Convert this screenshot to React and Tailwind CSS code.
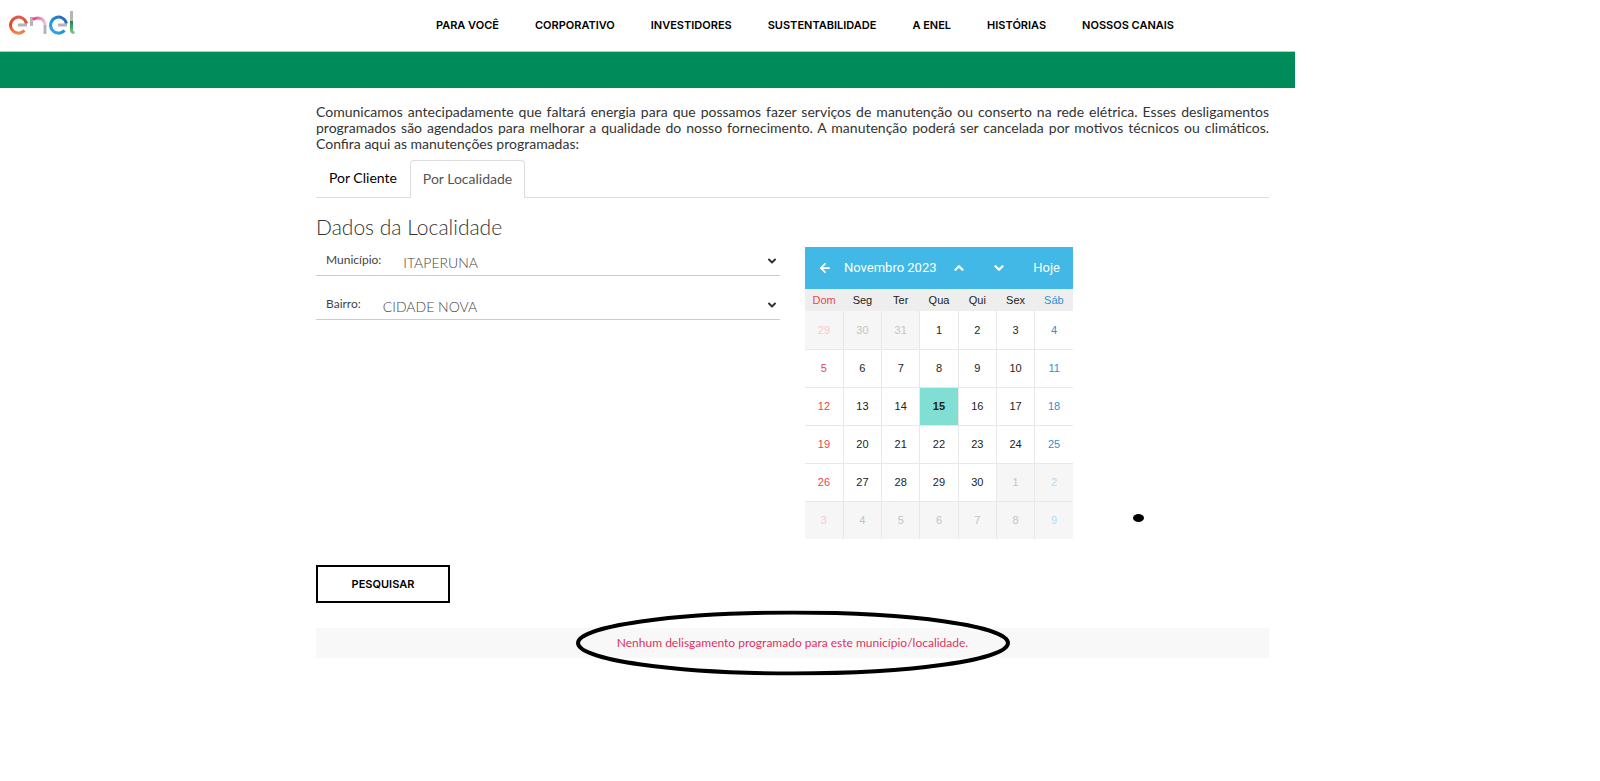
import React, { useState } from "react";
import { ArrowLeft, ChevronDown, ChevronUp } from "lucide-react";

const menu = [
  "PARA VOCÊ",
  "CORPORATIVO",
  "INVESTIDORES",
  "SUSTENTABILIDADE",
  "A ENEL",
  "HISTÓRIAS",
  "NOSSOS CANAIS",
];

const diasSemana = ["Dom", "Seg", "Ter", "Qua", "Qui", "Sex", "Sáb"];

const semanas = [
  [29, 30, 31, 1, 2, 3, 4],
  [5, 6, 7, 8, 9, 10, 11],
  [12, 13, 14, 15, 16, 17, 18],
  [19, 20, 21, 22, 23, 24, 25],
  [26, 27, 28, 29, 30, 1, 2],
  [3, 4, 5, 6, 7, 8, 9],
];

const foraDoMes = (semana, dia) => (semana === 0 && dia > 20) || (semana > 3 && dia < 20);

const corDoDia = (coluna, fora) => {
  if (coluna === 0) return fora ? "text-[#f8c9c9]" : "text-[#e8474c]";
  if (coluna === 6) return fora ? "text-[#b5dcf5]" : "text-[#2f8fd8]";
  return fora ? "text-[#c4c4c4]" : "text-[#222222]";
};

const Logo = () => (
  <svg width="68" height="26" viewBox="0 0 68 26" fill="none" role="img" aria-label="enel">
    <defs>
      <linearGradient id="laranja" x1="0" y1="0" x2="0" y2="1">
        <stop offset="0" stopColor="#e2574c" />
        <stop offset="0.5" stopColor="#e0452f" />
        <stop offset="1" stopColor="#f0874c" />
      </linearGradient>
      <linearGradient id="rosa" x1="0" y1="0" x2="1" y2="0">
        <stop offset="0" stopColor="#e0338c" />
        <stop offset="1" stopColor="#ecc3d9" />
      </linearGradient>
      <linearGradient id="azul" x1="0" y1="1" x2="1" y2="0">
        <stop offset="0" stopColor="#35b0e6" />
        <stop offset="0.5" stopColor="#1f8fd2" />
        <stop offset="1" stopColor="#2b62ae" />
      </linearGradient>
      <linearGradient id="verde" x1="0" y1="0" x2="0" y2="1">
        <stop offset="0" stopColor="#15884a" />
        <stop offset="1" stopColor="#7fcb86" />
      </linearGradient>
    </defs>
    <path d="M9 15H18" stroke="#b9b4b0" strokeWidth="3" />
    <path d="M17.4 13.5A8 8 0 1 0 15.5 20.5" stroke="url(#laranja)" strokeWidth="3" />
    <path d="M22.5 7V16" stroke="#b5b5b5" strokeWidth="3" />
    <path d="M24 9.5C29 6 36 9 36 15" stroke="url(#rosa)" strokeWidth="3" />
    <path d="M36 15V24" stroke="#b5b5b5" strokeWidth="3" />
    <path d="M49 15H58" stroke="#b5b5b5" strokeWidth="3" />
    <path d="M57.4 13.5A8 8 0 1 0 55.5 20.5" stroke="url(#azul)" strokeWidth="3" />
    <path d="M62.5 1V11" stroke="#b5b5b5" strokeWidth="3" />
    <path d="M61 11H64V20Q64 21.5 65.5 21.5V24Q61 24 61 20Z" fill="url(#verde)" />
  </svg>
);

const Campo = ({ id, label, valor }) => (
  <div className="flex h-[29px] items-center border-b border-[#cccccc] pl-[10px]">
    <label htmlFor={id} className="pb-[2px] text-xs text-[#444444]">
      {label}
    </label>
    <div className="relative ml-[22px] flex-1 pt-px">
      <select id={id} className="w-full appearance-none bg-transparent text-sm font-light text-[#444444] outline-none">
        <option>{valor}</option>
      </select>
      <ChevronDown
        className="pointer-events-none absolute top-1/2 right-[2px] -translate-y-1/2 text-[#333333]"
        size={12}
        strokeWidth={4}
      />
    </div>
  </div>
);

const Calendario = () => (
  <div className="w-[268px]">
    <div className="flex h-[42px] items-center bg-[#41b8e6] px-[13px] font-[Roboto,sans-serif] text-[13px] text-white">
      <button aria-label="Voltar">
        <ArrowLeft size={14} strokeWidth={3} />
      </button>
      <button className="ml-3">Novembro 2023</button>
      <button className="ml-[15px]" aria-label="Mês anterior">
        <ChevronUp size={14} strokeWidth={4} />
      </button>
      <button className="ml-[26px]" aria-label="Próximo mês">
        <ChevronDown size={14} strokeWidth={4} />
      </button>
      <button className="ml-auto">Hoje</button>
    </div>
    <table className="w-full table-fixed border-collapse text-center font-['Liberation_Sans',sans-serif] text-[11px]">
      <thead>
        <tr className="h-[22px] bg-[#eeeeee]">
          {diasSemana.map((dia, i) => (
            <th key={dia} className={`font-normal ${corDoDia(i, false)}`}>
              {dia}
            </th>
          ))}
        </tr>
      </thead>
      <tbody>
        {semanas.map((semana, s) => (
          <tr key={s} className="h-[38px] border-b border-[#e8e8e8] last:border-b-0">
            {semana.map((dia, i) => {
              const fora = foraDoMes(s, dia);
              const hoje = s === 2 && dia === 15;
              return (
                <td
                  key={i}
                  className={`border-r border-[#e8e8e8] last:border-r-0 ${corDoDia(i, fora)} ${
                    fora ? "bg-[#f6f6f6]" : ""
                  } ${hoje ? "bg-[#80dfd2] font-bold" : ""}`}
                >
                  {dia}
                </td>
              );
            })}
          </tr>
        ))}
      </tbody>
    </table>
  </div>
);

export default function App() {
  const [aba, setAba] = useState("localidade");

  const classeAba = (nome) =>
    aba === nome
      ? "-mb-px h-[38px] rounded-t border border-b-0 border-[#dddddd] bg-white px-3 pb-[2px] text-[#555555]"
      : "h-[37px] px-[13px] pb-[2px] text-black";

  return (
    <div className="min-h-screen bg-white pr-[305px] font-[Lato,sans-serif] text-[#333333]">
      <header className="flex h-[52px] items-center border-b border-[#b5c4bd]">
        <a href="#" className="ml-[9px] pb-[5px]">
          <Logo />
        </a>
        <nav className="ml-auto mr-[121px] flex gap-9 font-[Inter,sans-serif] text-[11px] font-semibold text-black">
          {menu.map((item) => (
            <a key={item} href="#">
              {item}
            </a>
          ))}
        </nav>
      </header>
      <div className="h-9 bg-[#008c5a]" />

      <main className="mr-[26px] ml-[316px] pt-4">
        <p className="text-justify text-sm leading-4">
          Comunicamos antecipadamente que faltará energia para que possamos fazer serviços de manutenção ou conserto na
          rede elétrica. Esses desligamentos programados são agendados para melhorar a qualidade do nosso fornecimento.
          A manutenção poderá ser cancelada por motivos técnicos ou climáticos. Confira aqui as manutenções programadas:
        </p>

        <div className="mt-2 flex items-start border-b border-[#dddddd] text-sm">
          <button className={classeAba("cliente")} onClick={() => setAba("cliente")}>
            Por Cliente
          </button>
          <button className={classeAba("localidade")} onClick={() => setAba("localidade")}>
            Por Localidade
          </button>
        </div>

        <h2 className="mt-[15px] mb-[6px] text-[21px] leading-7 font-light">Dados da Localidade</h2>
        <div className="relative flex gap-[25px]">
          <div className="flex flex-1 flex-col gap-[15px]">
            <Campo id="municipio" label="Município:" valor="ITAPERUNA" />
            <Campo id="bairro" label="Bairro:" valor="CIDADE NOVA" />
          </div>
          <div className="flex-1">
            <Calendario />
          </div>
          <span className="absolute right-[125px] bottom-[17px] h-[8px] w-[11px] rounded-[50%] bg-black" />
        </div>

        <button className="mt-[26px] h-[38px] w-[134px] border-2 border-black font-[Inter,sans-serif] text-[11px] font-semibold text-black">
          PESQUISAR
        </button>

        <div className="relative mt-[25px] flex h-[30px] items-center justify-center bg-[#f8f8f8] text-xs text-[#e0305f]">
          Nenhum delisgamento programado para este município/localidade.
          <svg
            className="absolute top-1/2 left-1/2 -translate-x-1/2 -translate-y-1/2"
            width="434"
            height="65"
            viewBox="0 0 434 65"
            aria-hidden="true"
          >
            <ellipse cx="217" cy="32.5" rx="215" ry="30.5" fill="none" stroke="black" strokeWidth="4" />
          </svg>
        </div>
      </main>
    </div>
  );
}
